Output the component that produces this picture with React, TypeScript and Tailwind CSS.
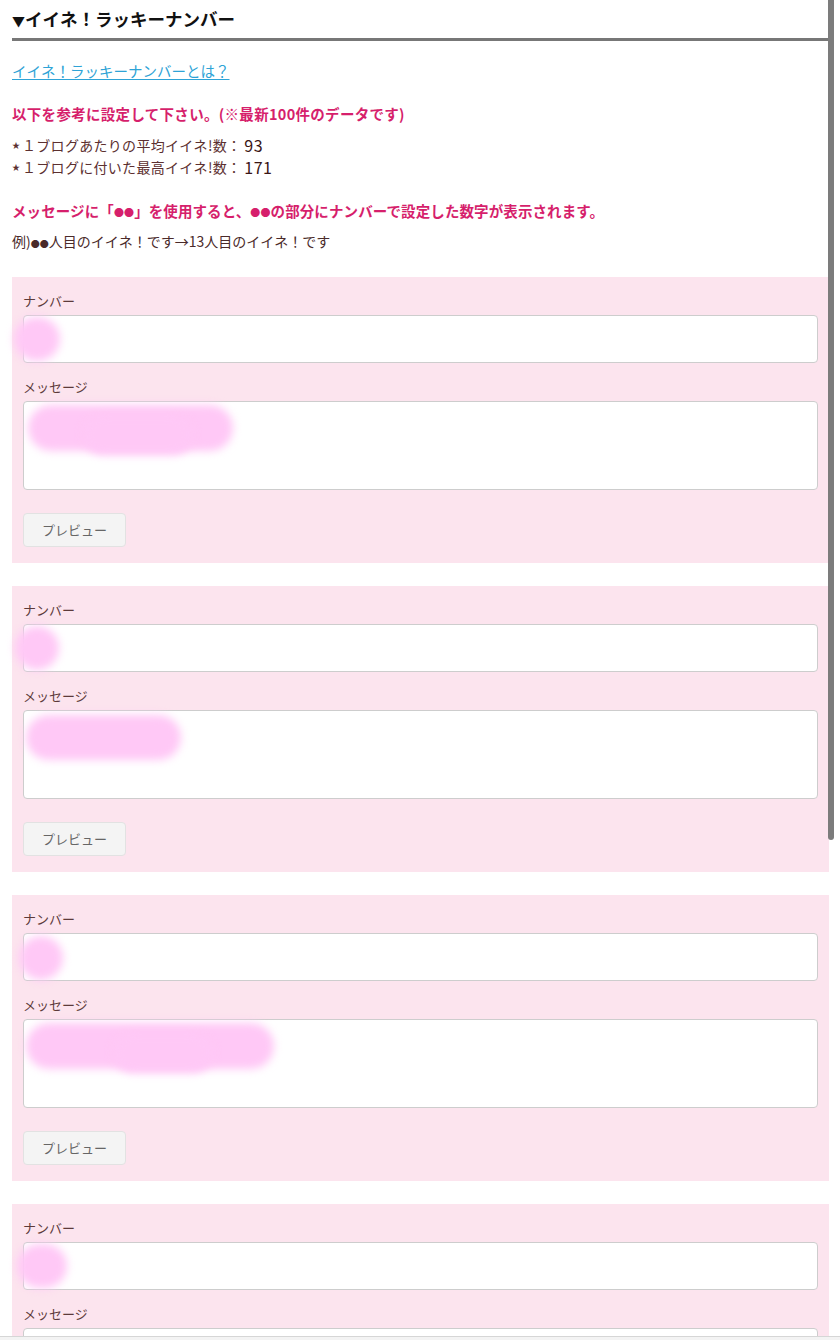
import React from 'react';

type Blob = { l: number; t: number; w: number; h: number };

type Entry = {
  numBlob: Blob;
  msgBlobs: Blob[];
};

const entries: Entry[] = [
  { numBlob: { l: -9, t: 2, w: 46, h: 44 }, msgBlobs: [{ l: 5, t: 4, w: 205, h: 46 }, { l: 60, t: 14, w: 110, h: 40 }] },
  { numBlob: { l: -8, t: 2, w: 44, h: 44 }, msgBlobs: [{ l: 3, t: 5, w: 155, h: 45 }] },
  { numBlob: { l: -4, t: 3, w: 44, h: 44 }, msgBlobs: [{ l: 3, t: 4, w: 248, h: 46 }, { l: 90, t: 14, w: 100, h: 40 }] },
  { numBlob: { l: -6, t: 2, w: 50, h: 44 }, msgBlobs: [] },
];

const PinkBlob: React.FC<{ b: Blob }> = ({ b }) => (
  <div
    className="absolute rounded-full bg-[#ffc8f6] blur-[4px] pointer-events-none"
    style={{ left: b.l, top: b.t, width: b.w, height: b.h }}
  />
);

const EntryPanel: React.FC<{ entry: Entry }> = ({ entry }) => (
  <div className="bg-[#fce4ee] px-[11px] pt-[14px] pb-[16px]">
    <div className="text-[13px] leading-[20px] text-[#5c3a3a]">ナンバー</div>
    <div className="relative mt-[4px]">
      <div className="h-[48px] rounded-[4px] border border-[#cdcdcd] bg-white" />
      <PinkBlob b={entry.numBlob} />
    </div>
    <div className="mt-[14px] text-[13px] leading-[20px] text-[#5c3a3a]">メッセージ</div>
    <div className="relative mt-[4px]">
      <div className="h-[89px] rounded-[4px] border border-[#cdcdcd] bg-white" />
      {entry.msgBlobs.map((b, i) => (
        <PinkBlob key={i} b={b} />
      ))}
    </div>
    <button className="mt-[23px] h-[34px] w-[103px] rounded-[4px] border border-[#e2e2e2] bg-[#f4f4f4] text-[13px] text-[#666]">
      プレビュー
    </button>
  </div>
);

const App: React.FC = () => {
  return (
    <div
      className="relative h-[1340px] w-full overflow-hidden bg-white"
      style={{ fontFamily: '"Noto Sans CJK JP", "Noto Sans", sans-serif' }}
    >
      <div className="ml-[12px] mr-[11px]">
        {/* Heading */}
        <div className="border-b-[3px] border-[#777] pt-[7px] pb-[5px] text-[17.5px] font-bold leading-[24px] text-[#111]">
          <span className="text-[13px]">▼</span>イイネ！ラッキーナンバー
        </div>

        <a href="#" className="mt-[19px] block text-[14.5px] leading-[22px] text-[#2ea3d6] underline underline-offset-2">
          イイネ！ラッキーナンバーとは？
        </a>

        <p className="mt-[21px] text-[14.5px] tracking-[0.3px] font-bold leading-[22px] text-[#d61f6c]">
          以下を参考に設定して下さい。(※最新100件のデータです)
        </p>

        <div className="mt-[9px] text-[14px] leading-[22px] text-[#5c3030]">
          <div className="flex items-center">
            <span className="text-[8px] mr-[2px]">★</span>
            <span className="tracking-[0.3px]">１ブログあたりの平均イイネ!数：</span>
            <span className="ml-[3px] text-[16px] tracking-[0.5px] text-[#3a1515]">93</span>
          </div>
          <div className="flex items-center">
            <span className="text-[8px] mr-[2px]">★</span>
            <span className="tracking-[0.3px]">１ブログに付いた最高イイネ!数：</span>
            <span className="ml-[3px] text-[16px] tracking-[0.5px] text-[#3a1515]">171</span>
          </div>
        </div>

        <p className="mt-[22px] text-[14.5px] tracking-[0.1px] font-bold leading-[22px] text-[#d61f6c]">
          メッセージに「<span className="text-[10px]">●●</span>」を使用すると、<span className="text-[10px]">●●</span>の部分にナンバーで設定した数字が表示されます。
        </p>

        <p className="mt-[6px] text-[14px] leading-[22px] text-[#4a2a2a]">
          例)<span className="text-[9px]">●●</span>人目のイイネ！です→13人目のイイネ！です
        </p>

        <div className="mt-[22px] flex flex-col gap-[23px]">
          {entries.map((e, i) => (
            <EntryPanel key={i} entry={e} />
          ))}
        </div>
      </div>

      {/* scrollbar thumb overlay */}
      <div className="absolute right-[6px] top-0 h-[840px] w-[6px] rounded-b-full bg-[#7c7c7c]" />

      {/* bottom browser edge */}
      <div className="absolute bottom-0 left-0 h-[4px] w-full border-t border-[#d6d6d6] bg-[#f3f3f3]" />
    </div>
  );
};

export default App;
